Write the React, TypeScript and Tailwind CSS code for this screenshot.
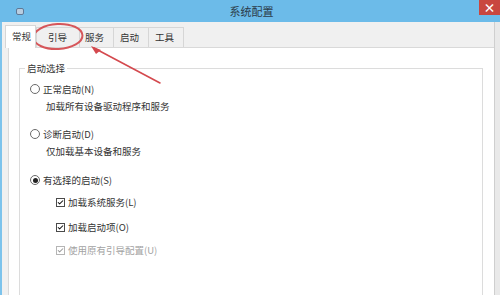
import { Check } from "lucide-react";

const font = { fontFamily: '"Noto Sans CJK SC", "Noto Sans", sans-serif' };

const tabs = ["常规", "引导", "服务", "启动", "工具"];

function Radio({ checked }: { checked?: boolean }) {
  return (
    <span className="w-[10px] h-[10px] rounded-full border border-[#6a6a6a] bg-white flex items-center justify-center shrink-0">
      {checked ? <span className="w-[5px] h-[5px] rounded-full bg-[#222]" /> : null}
    </span>
  );
}

function Box({ disabled }: { disabled?: boolean }) {
  return (
    <span
      className={
        "w-[9px] h-[9px] border bg-white flex items-center justify-center shrink-0 " +
        (disabled ? "border-[#b5b5b5]" : "border-[#4a4a4a]")
      }
    >
      <Check size={9} strokeWidth={3.5} className={disabled ? "text-[#9a9a9a]" : "text-[#111]"} />
    </span>
  );
}

export default function App() {
  return (
    <div className="relative w-[500px] h-[295px] overflow-hidden bg-[#f0f0f0] flex flex-col text-[#333]" style={font}>
      <div className="h-[22px] bg-[#6cbbe9] flex items-start shrink-0">
        <div className="w-[24px] h-[22px] flex items-center justify-end">
          <span className="w-[8px] h-[7px] rounded-[2px] border border-[#5e7896] bg-[#b8cde0]" />
        </div>
        <div className="flex-1 text-center text-[11px] leading-[22px] text-[#2b3a48]">系统配置</div>
        <div className="w-[21px] h-[15px] bg-[#c9473f] flex items-center justify-center text-white text-[12px] leading-none font-bold">
          ×
        </div>
      </div>

      <div className="flex-1 flex border-l-2 border-[#7cc3ec]">
        <div className="w-[492px] flex flex-col">
          <div className="h-[25px] flex items-end pl-[3px] shrink-0">
            <div className="w-[31px] h-[23px] -mb-px bg-white border border-b-0 border-[#d6d6d6] text-[9.5px] leading-[20px] pl-[6px] relative z-10">
              常规
            </div>
            {tabs.slice(1).map((t, i) => (
              <div
                key={t}
                className={
                  "h-[20px] border border-b-0 border-[#d6d6d6] bg-[#f0f0f0] text-[9.5px] leading-[19px] " +
                  (i === 0 ? "w-[44px] pl-[11px]" : i === 1 ? "w-[35px] pl-[5px] -ml-px" : "w-[36px] pl-[6px] -ml-px")
                }
              >
                {t}
              </div>
            ))}
          </div>

          <div className="ml-[6px] w-[487px] flex-1 bg-white border border-[#d9d9d9] border-b-0 pt-[20px] pl-[10px] pr-[11px]">
            <div className="relative border border-[#dcdcdc] border-b-0 h-[240px] pt-[13px] pl-[10px] text-[9.5px] leading-[14px]">
              <span className="absolute -top-[8px] left-[5px] bg-white px-[2px] leading-[14px]">启动选择</span>

              <div className="flex items-center gap-[3px]">
                <Radio />
                <span>正常启动(N)</span>
              </div>
              <div className="mt-[3px] pl-[16px]">加载所有设备驱动程序和服务</div>

              <div className="mt-[14px] flex items-center gap-[3px]">
                <Radio />
                <span>诊断启动(D)</span>
              </div>
              <div className="mt-[3px] pl-[16px]">仅加载基本设备和服务</div>

              <div className="mt-[15px] flex items-center gap-[3px]">
                <Radio checked />
                <span>有选择的启动(S)</span>
              </div>

              <div className="pl-[26px]">
                <div className="mt-[8px] flex items-center gap-[3px]">
                  <Box />
                  <span>加载系统服务(L)</span>
                </div>
                <div className="mt-[11px] flex items-center gap-[3px]">
                  <Box />
                  <span>加载启动项(O)</span>
                </div>
                <div className="mt-[9px] flex items-center gap-[3px] text-[#a3a3a3]">
                  <Box disabled />
                  <span>使用原有引导配置(U)</span>
                </div>
              </div>
            </div>
          </div>
        </div>
        <div className="w-[6px] bg-[#e9e9e9] border-l border-[#cfcfcf]" />
      </div>

      <svg className="absolute inset-0 pointer-events-none" width="500" height="295" viewBox="0 0 500 295">
        <ellipse cx="58" cy="36.5" rx="24.5" ry="12.5" fill="none" stroke="#d6565a" strokeWidth="2" transform="rotate(-3 58 36.5)" />
        <line x1="160" y1="83" x2="94" y2="48" stroke="#d4494e" strokeWidth="1.6" strokeLinecap="round" />
        <polygon points="91,46 101,50 96,54" fill="#d4494e" />
      </svg>
    </div>
  );
}
